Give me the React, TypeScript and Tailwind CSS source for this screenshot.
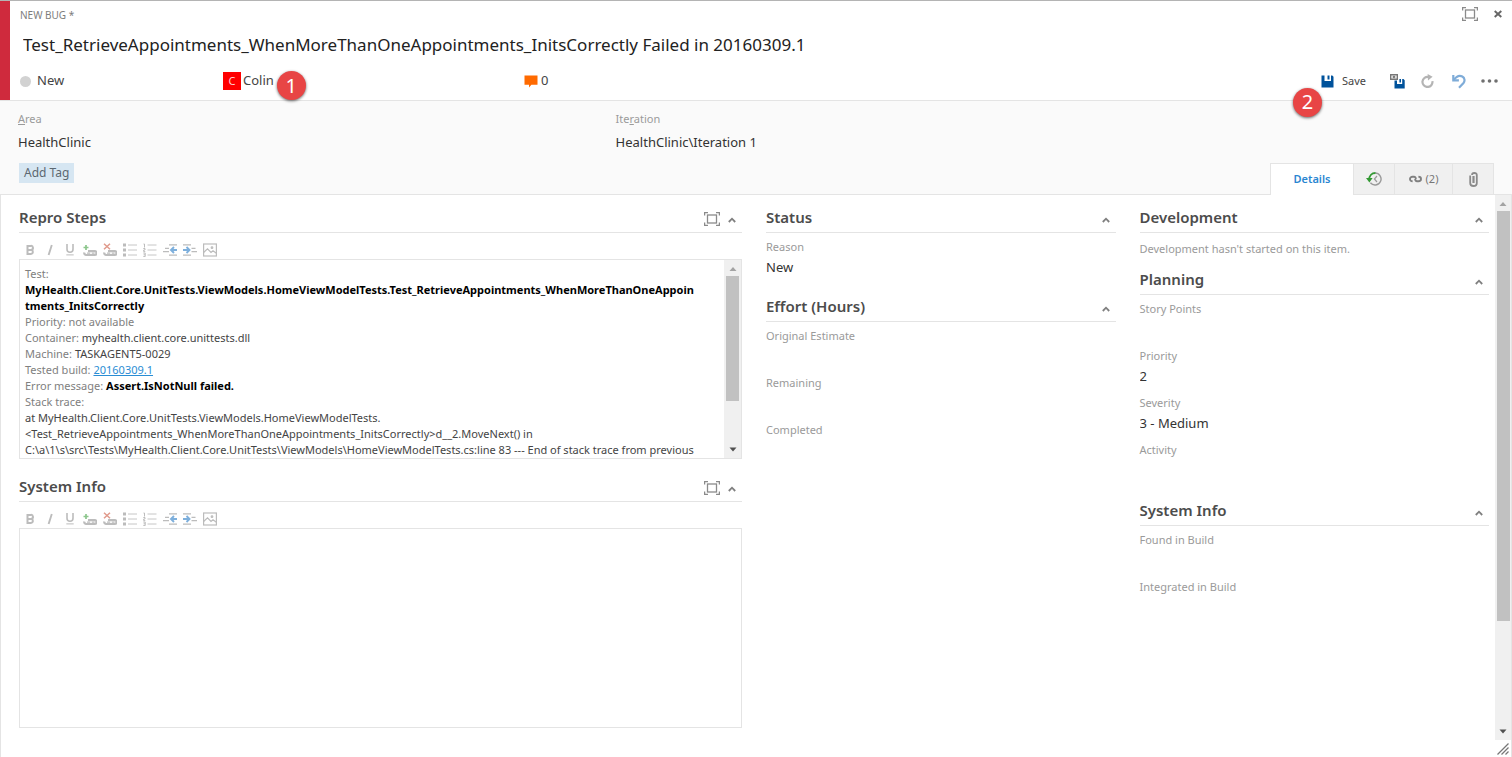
import React from "react";

type Kids = { children?: React.ReactNode };

function FullscreenIcon() {
  return (
    <svg width="16" height="14" viewBox="0 0 16 14" fill="none" stroke="#8a8a8a" strokeWidth="1.3">
      <rect x="3.5" y="3" width="9" height="8" />
      <path d="M0.6 3.5V0.6H4M12 0.6h3.4v2.9M15.4 10.5v2.9H12M4 13.4H0.6v-2.9" />
    </svg>
  );
}

function ChevronUp() {
  return (
    <svg width="8" height="6" viewBox="0 0 8 6" fill="none" stroke="#808080" strokeWidth="1.8">
      <path d="M0.8 5L4 1.7 7.2 5" />
    </svg>
  );
}

function SaveIcon() {
  return (
    <svg width="13" height="13" viewBox="0 0 13 13" fill="#00529b">
      <path d="M0.500 0.500H3.500V6H10V0.500h1.300L12.500 1.700v10.800H0.500z" />
      <path d="M6.500 0.500h2v4h-2z" />
    </svg>
  );
}

function SaveCloseIcon() {
  return (
    <svg width="15" height="15" viewBox="0 0 15 15">
      <path d="M4.500 6.500H7V10h5.200V5h1.300l1.200 1.200v8.400H4.500z" fill="#00529b" />
      <path d="M9.400 5h1.600v3.500H9.400z" fill="#00529b" />
      <path d="M0.700 0.700h6.600v4.600H0.700z" fill="#fff" stroke="#777" strokeWidth="1.400" />
      <path d="M2.800 1.800l2.400 2.400M5.200 1.800L2.800 4.200" stroke="#777" strokeWidth="1.100" />
    </svg>
  );
}

function RefreshIcon() {
  return (
    <svg width="13" height="14" viewBox="0 0 13 14" fill="none">
      <path d="M11.400 7.200A5 5 0 1 1 7.600 3.100" stroke="#b4b4b4" strokeWidth="2.200" />
      <path d="M6.600 0l5 2.800-4.600 3.600z" fill="#b4b4b4" />
    </svg>
  );
}

function UndoIcon() {
  return (
    <svg width="14" height="15" viewBox="0 0 14 15" fill="none" stroke="#7facd8" strokeWidth="2.200">
      <path d="M1.300 1v5.400h5.600" />
      <path d="M1.600 6.200C4.500 2.200 8 1.400 10.300 2.600c2.600 1.400 2.800 4.400 1.200 6.400L7 13.800" />
    </svg>
  );
}

function MoreIcon() {
  return (
    <svg width="17" height="4" viewBox="0 0 17 4" fill="#707070">
      <circle cx="2" cy="2" r="1.800" />
      <circle cx="8.500" cy="2" r="1.800" />
      <circle cx="15" cy="2" r="1.800" />
    </svg>
  );
}

function CommentIcon() {
  return (
    <svg width="14" height="13" viewBox="0 0 14 13">
      <path d="M0.500 0.500h13v9.200H7.400L5 12.600V9.700H0.500z" fill="#ff6a00" />
    </svg>
  );
}

function HistoryIcon() {
  return (
    <svg width="16" height="14" viewBox="0 0 16 14" fill="none">
      <path d="M9 1a6 6 0 1 1-4.600 9.800" stroke="#9a9a9a" strokeWidth="1.400" />
      <path d="M3.200 7.500C3.200 3.600 5.800 1 9.400 1" stroke="#339933" strokeWidth="1.800" />
      <path d="M0 6h6.600L3.400 10.400z" fill="#339933" />
      <path d="M11 4L8.400 7l2.600 3" stroke="#9a9a9a" strokeWidth="1.200" />
    </svg>
  );
}

function LinkIcon() {
  return (
    <svg width="13" height="8" viewBox="0 0 13 8" fill="none" stroke="#808080" strokeWidth="1.900">
      <path d="M3.600 6.200C1.800 6.200 1 5.300 1 4s1-2.200 2.500-2.200H5c1.300 0 1.700.8 2 2.200" />
      <path d="M9.400 1.800c1.800 0 2.600.9 2.600 2.200s-1 2.200-2.500 2.200H8C6.700 6.200 6.300 5.400 6 4" />
    </svg>
  );
}

function ClipIcon() {
  return (
    <svg width="9" height="15" viewBox="0 0 9 15" fill="none" stroke="#8a8a8a" strokeWidth="1.800">
      <path d="M1.200 3.400V11c0 2 1.300 3 3.300 3S7.800 13 7.800 11V3C7.800 1.600 7 1 5.300 1S3 1.600 3 3" />
      <path d="M4.500 4v7" strokeWidth="2.200" />
    </svg>
  );
}

function ResizeGrip() {
  return (
    <svg width="12" height="12" viewBox="0 0 12 12" stroke="#777" strokeWidth="1.300">
      <path d="M0.500 11.500l11-11M4.500 11.500l7-7M8.500 11.500l3-3" />
    </svg>
  );
}

function ChainBase() {
  return (
    <g fill="none" stroke="#bcbcbc">
      <path d="M5 8.200h6.700a1.900 1.900 0 0 1 0 3.800H3.200a1.900 1.900 0 0 1-1.800-2.500" strokeWidth="2.200" />
      <path d="M4 10.100h3.200M8.800 10.100h2.800" strokeWidth="1.200" />
    </g>
  );
}

const editorTools: { label: string; art: React.ReactNode }[] = [
  {
    label: "Bold",
    art: <path d="M4.500 2.900h3.200a1.800 1.800 0 0 1 .6 3.900 2.200 2.200 0 0 1-.4 4.300H4.500zM4.500 6.900h4" fill="none" stroke="#bcbcbc" strokeWidth="2" />,
  },
  { label: "Italic", art: <path d="M8.800 2L5.600 12" stroke="#bcbcbc" strokeWidth="1.900" /> },
  {
    label: "Underline",
    art: (
      <g fill="none" stroke="#bcbcbc" strokeWidth="1.600">
        <path d="M4 1v5.300c0 2 1.200 3 3 3s3-1 3-3V1" />
        <path d="M3.300 11.900h7.400" strokeWidth="1" />
      </g>
    ),
  },
  {
    label: "Insert link",
    art: (
      <>
        <ChainBase />
        <path d="M3 2v5M0.500 4.500h5" stroke="#8cc68c" strokeWidth="1.700" />
      </>
    ),
  },
  {
    label: "Remove link",
    art: (
      <>
        <ChainBase />
        <path d="M1 0.700l6 5.600M7 0.700L1 6.300" stroke="#e09a8c" strokeWidth="1.500" />
      </>
    ),
  },
  {
    label: "Bulleted list",
    art: (
      <>
        <path d="M0 0.500h3v3H0zM0 5.500h3v3H0zM0 10.500h3v3H0z" fill="#bcbcbc" />
        <path d="M5 2h9M5 7h9M5 12h9" stroke="#c6c6c6" />
      </>
    ),
  },
  {
    label: "Numbered list",
    art: (
      <>
        <path d="M0.500 1h1v3.500M0.300 5.500h1.700v1.500H0.700v1.600h1.600M0.300 10h1.900v3.600H0.300M0.600 11.800h1.600" fill="none" stroke="#bcbcbc" />
        <path d="M4.500 2h9M4.500 7h9M4.500 12h9" stroke="#c6c6c6" />
      </>
    ),
  },
  {
    label: "Decrease indent",
    art: (
      <>
        <path d="M6 1.800h8M6 12.200h8M2 5.300h4M0 8.700h6" stroke="#bcbcbc" strokeWidth="1.300" />
        <path d="M14 7H8.500M11 4L8 7l3 3" fill="none" stroke="#7dafdc" strokeWidth="1.900" />
      </>
    ),
  },
  {
    label: "Increase indent",
    art: (
      <>
        <path d="M0 1.800h8M0 12.200h8M8.500 5.300h4M8.500 8.700H14" stroke="#bcbcbc" strokeWidth="1.300" />
        <path d="M0 7h5.500M3.500 4l3 3-3 3" fill="none" stroke="#7dafdc" strokeWidth="1.900" />
      </>
    ),
  },
  {
    label: "Insert image",
    art: (
      <g fill="none" stroke="#bcbcbc" strokeWidth="1.200">
        <rect x="0.600" y="1" width="12.800" height="12" />
        <path d="M0.600 9.500L4.500 5.800l3.500 3.700 2-1.800 3.400 2.600" />
        <circle cx="9" cy="4.700" r="0.800" />
      </g>
    ),
  },
];

function EditorToolbar() {
  return (
    <div className="flex h-[26px] items-center gap-[6px] pt-[7px] pl-1" role="toolbar">
      {editorTools.map((t) => (
        <button key={t.label} type="button" aria-label={t.label} className="h-[14px] w-[14px]">
          <svg width="14" height="14" viewBox="0 0 14 14">
            {t.art}
          </svg>
        </button>
      ))}
    </div>
  );
}

function ScrollTrack({ thumb, className }: { thumb: string; className: string }) {
  return (
    <div aria-hidden="true" className={`flex shrink-0 flex-col items-center bg-[#f0f0f0] ${className}`}>
      <svg width="8" height="16" viewBox="0 0 8 16" fill="#a3a3a3" className="shrink-0">
        <path d="M0.500 11L4 7l3.500 4z" />
      </svg>
      <div className="flex w-full flex-1 flex-col items-center">
        <div className={`w-[13px] bg-[#c1c1c1] ${thumb}`} />
      </div>
      <svg width="8" height="16" viewBox="0 0 8 16" fill="#505050" className="shrink-0">
        <path d="M0.500 5.500L4 9.500l3.500-4z" />
      </svg>
    </div>
  );
}

function Section({ title, expandable, className = "pb-[15px]", children }: Kids & { title: string; expandable?: boolean; className?: string }) {
  return (
    <section className={className}>
      <div className="flex h-7 items-center border-b border-[#e4e4e4]">
        <h2 className="flex-1 pb-[3px] text-[15px] font-semibold text-[#4c4c4c]">{title}</h2>
        {expandable && (
          <button type="button" aria-label={`Expand ${title}`} className="mr-2">
            <FullscreenIcon />
          </button>
        )}
        <button type="button" aria-label={`Collapse ${title}`} className="mr-[6px] pt-[2px]">
          <ChevronUp />
        </button>
      </div>
      {children}
    </section>
  );
}

function Field({ label, id, value = "", options }: { label: string; id: string; value?: string; options?: boolean }) {
  return (
    <div className="flex flex-col">
      <label htmlFor={id} className="h-5 text-[11px] leading-5 text-[#9a9a9a]">
        {label}
      </label>
      {options ? (
        <select id={id} defaultValue={value} className="h-[22px] w-full appearance-none bg-transparent text-[13px] text-[#333] outline-none">
          <option>{value}</option>
        </select>
      ) : (
        <input id={id} defaultValue={value} className="h-[22px] w-full bg-transparent text-[13px] text-[#333] outline-none" />
      )}
    </div>
  );
}

function Callout({ className, children }: Kids & { className: string }) {
  return (
    <span
      className={`absolute z-10 flex h-[29px] w-[29px] items-center justify-center rounded-full bg-[#e84545] text-xl text-white shadow-[0_1px_3px_rgba(0,0,0,0.6)] ${className}`}
    >
      {children}
    </span>
  );
}

function Header() {
  return (
    <header className="border-b border-[#e4e4e4]">
      <div className="border-l-10 border-[#cf2a3d] pt-[6px] pr-[14px] pb-[6px] pl-[10px]">
        <div className="flex h-4 items-start justify-between">
          <span className="text-[10px] leading-4 text-[#7d7d7d]">NEW BUG *</span>
          <div className="flex items-center gap-4">
            <button type="button" aria-label="Full screen">
              <FullscreenIcon />
            </button>
            <button type="button" aria-label="Close" className="-mr-1">
              <svg width="8" height="8" viewBox="0 0 8 8" stroke="#666" strokeWidth="1.900">
                <path d="M0.700 1l6.600 6M7.300 1L0.700 7" />
              </svg>
            </button>
          </div>
        </div>
        <input
          aria-label="Title"
          defaultValue="Test_RetrieveAppointments_WhenMoreThanOneAppointments_InitsCorrectly Failed in 20160309.1"
          className="mt-[7px] block h-7 w-full bg-transparent pl-[3px] text-[17px] text-[#222] outline-none"
        />
        <div className="mt-[10px] grid h-[26px] grid-cols-[203px_301px_1fr_auto] items-center text-[13px] text-[#444]">
          <div className="flex items-center gap-[6px]">
            <span className="h-[11px] w-[11px] rounded-full bg-[#d2d2d2]" />
            <select aria-label="State" defaultValue="New" className="appearance-none bg-transparent outline-none">
              <option>New</option>
            </select>
          </div>
          <div className="flex">
            <div className="relative flex items-center gap-[2px]">
              <span className="flex h-[18px] w-[18px] items-center justify-center bg-[#ff0000] text-[11px] text-[#ffd0d0]">C</span>
              <span>Colin</span>
              <Callout className="-right-8 top-0">1</Callout>
            </div>
          </div>
          <div>
            <button type="button" aria-label="0 comments" className="flex items-center gap-[3px]">
              <CommentIcon />
              <span>0</span>
            </button>
          </div>
          <div className="flex items-center">
            <button type="button" className="relative mr-6 flex items-center gap-2 text-[11px]">
              <SaveIcon />
              Save
              <Callout className="-left-7 top-[15px]">2</Callout>
            </button>
            <button type="button" aria-label="Save and close" className="mr-4">
              <SaveCloseIcon />
            </button>
            <button type="button" aria-label="Refresh" className="mr-[18px]">
              <RefreshIcon />
            </button>
            <button type="button" aria-label="Undo" className="mr-[15px]">
              <UndoIcon />
            </button>
            <button type="button" aria-label="More actions" className="flex h-4 items-center">
              <MoreIcon />
            </button>
          </div>
        </div>
      </div>
    </header>
  );
}

function ClassificationBand() {
  const tab = "flex items-center justify-center border-t border-r border-[#e4e4e4]";
  return (
    <div className="border-b border-[#e4e4e4] bg-[#fafafa] pt-2 pl-[18px]">
      <div className="grid grid-cols-[2fr_3fr]">
        <div className="flex flex-col">
          <label htmlFor="area" className="h-5 text-[11px] leading-5 text-[#9a9a9a]">
            <u>A</u>rea
          </label>
          <input id="area" defaultValue="HealthClinic" className="h-[26px] bg-transparent text-[13px] text-[#333] outline-none" />
        </div>
        <div className="flex flex-col">
          <label htmlFor="iteration" className="h-5 text-[11px] leading-5 text-[#9a9a9a]">
            Ite<u>r</u>ation
          </label>
          <input id="iteration" defaultValue="HealthClinic\Iteration 1" className="h-[26px] bg-transparent text-[13px] text-[#333] outline-none" />
        </div>
      </div>
      <div className="mt-2 -mb-px flex items-start justify-between pr-[18px]">
        <button type="button" className="ml-px h-5 bg-[#d6e6f2] px-[5px] text-xs text-[#5c6770]">
          Add Tag
        </button>
        <div role="tablist" className="flex h-8 border-l border-[#e4e4e4] text-[11px] text-[#777]">
          <button type="button" role="tab" aria-selected="true" className={`${tab} w-[83px] bg-white font-semibold text-[#2a86d1]`}>
            Details
          </button>
          <button type="button" role="tab" aria-label="History" className={`${tab} w-[41px] border-b bg-[#f0f0f0]`}>
            <HistoryIcon />
          </button>
          <button type="button" role="tab" aria-label="Links" className={`${tab} w-[58px] gap-1 border-b bg-[#f0f0f0]`}>
            <LinkIcon />
            (2)
          </button>
          <button type="button" role="tab" aria-label="Attachments" className={`${tab} w-[41px] border-b bg-[#f0f0f0]`}>
            <ClipIcon />
          </button>
        </div>
      </div>
    </div>
  );
}

function ReproSteps() {
  return (
    <div className="flex h-[200px] border border-[#e4e4e4]">
      <div
        role="textbox"
        aria-multiline="true"
        aria-label="Repro Steps"
        contentEditable
        suppressContentEditableWarning
        className="min-w-0 flex-1 overflow-hidden pt-[6px] pl-[5px] text-[11px] leading-4 whitespace-nowrap text-[#808080] outline-none"
      >
        <div>Test:</div>
        <div className="font-bold text-black">
          MyHealth.Client.Core.UnitTests.ViewModels.HomeViewModelTests.Test_RetrieveAppointments_WhenMoreThanOneAppoin
          <br />
          tments_InitsCorrectly
        </div>
        <div>Priority: not available</div>
        <div>
          Container: <span className="text-[#444]">myhealth.client.core.unittests.dll</span>
        </div>
        <div>
          Machine: <span className="text-[#444]">TASKAGENT5-0029</span>
        </div>
        <div>
          Tested build:{" "}
          <a href="#build" className="text-[#2a8dd4] underline">
            20160309.1
          </a>
        </div>
        <div>
          Error message: <b className="text-black">Assert.IsNotNull failed.</b>
        </div>
        <div>Stack trace:</div>
        <div className="text-[#444]">
          at MyHealth.Client.Core.UnitTests.ViewModels.HomeViewModelTests.
          <br />
          &lt;Test_RetrieveAppointments_WhenMoreThanOneAppointments_InitsCorrectly&gt;d__2.MoveNext() in
          <br />
          C:\a\1\s\src\Tests\MyHealth.Client.Core.UnitTests\ViewModels\HomeViewModelTests.cs:line 83 --- End of stack trace from previous
        </div>
      </div>
      <ScrollTrack className="w-[17px]" thumb="h-3/4" />
    </div>
  );
}

export default function App() {
  return (
    <div className="flex min-h-screen flex-col border-t border-t-[#b4b4b4] bg-white font-['Noto_Sans','Open_Sans',sans-serif]">
      <Header />
      <ClassificationBand />
      <main className="flex flex-1 border-x border-[#e4e4e4]">
        <div className="grid flex-1 grid-cols-4 gap-x-6 pt-[10px] pr-[6px] pb-[14px] pl-[18px]">
          <div className="col-span-2 min-w-0">
            <Section title="Repro Steps" expandable>
              <EditorToolbar />
              <ReproSteps />
            </Section>
            <Section title="System Info" expandable>
              <EditorToolbar />
              <textarea aria-label="System Info" className="block h-[200px] w-full resize-none border border-[#e4e4e4] p-[5px] text-[11px] outline-none" />
            </Section>
          </div>
          <div className="min-w-0">
            <Section title="Status">
              <div className="pt-1">
                <Field id="reason" label="Reason" value="New" options />
              </div>
            </Section>
            <Section title="Effort (Hours)">
              <div className="flex flex-col gap-[5px] pt-1">
                <Field id="estimate" label="Original Estimate" />
                <Field id="remaining" label="Remaining" />
                <Field id="completed" label="Completed" />
              </div>
            </Section>
          </div>
          <div className="min-w-0">
            <Section title="Development" className="pb-2">
              <p className="pt-[6px] text-[11px] leading-5 text-[#9a9a9a]">Development hasn't started on this item.</p>
            </Section>
            <Section title="Planning" className="pb-4">
              <div className="flex flex-col gap-[5px] pt-1">
                <Field id="points" label="Story Points" />
                <Field id="priority" label="Priority" value="2" options />
                <Field id="severity" label="Severity" value="3 - Medium" options />
                <Field id="activity" label="Activity" />
              </div>
            </Section>
            <Section title="System Info">
              <div className="flex flex-col gap-[5px] pt-1">
                <Field id="found" label="Found in Build" />
                <Field id="integrated" label="Integrated in Build" />
              </div>
            </Section>
          </div>
        </div>
        <div className="flex w-4 shrink-0 flex-col">
          <ScrollTrack className="w-full flex-1" thumb="h-4/5" />
          <div className="flex h-[17px] items-center justify-center">
            <ResizeGrip />
          </div>
        </div>
      </main>
    </div>
  );
}
